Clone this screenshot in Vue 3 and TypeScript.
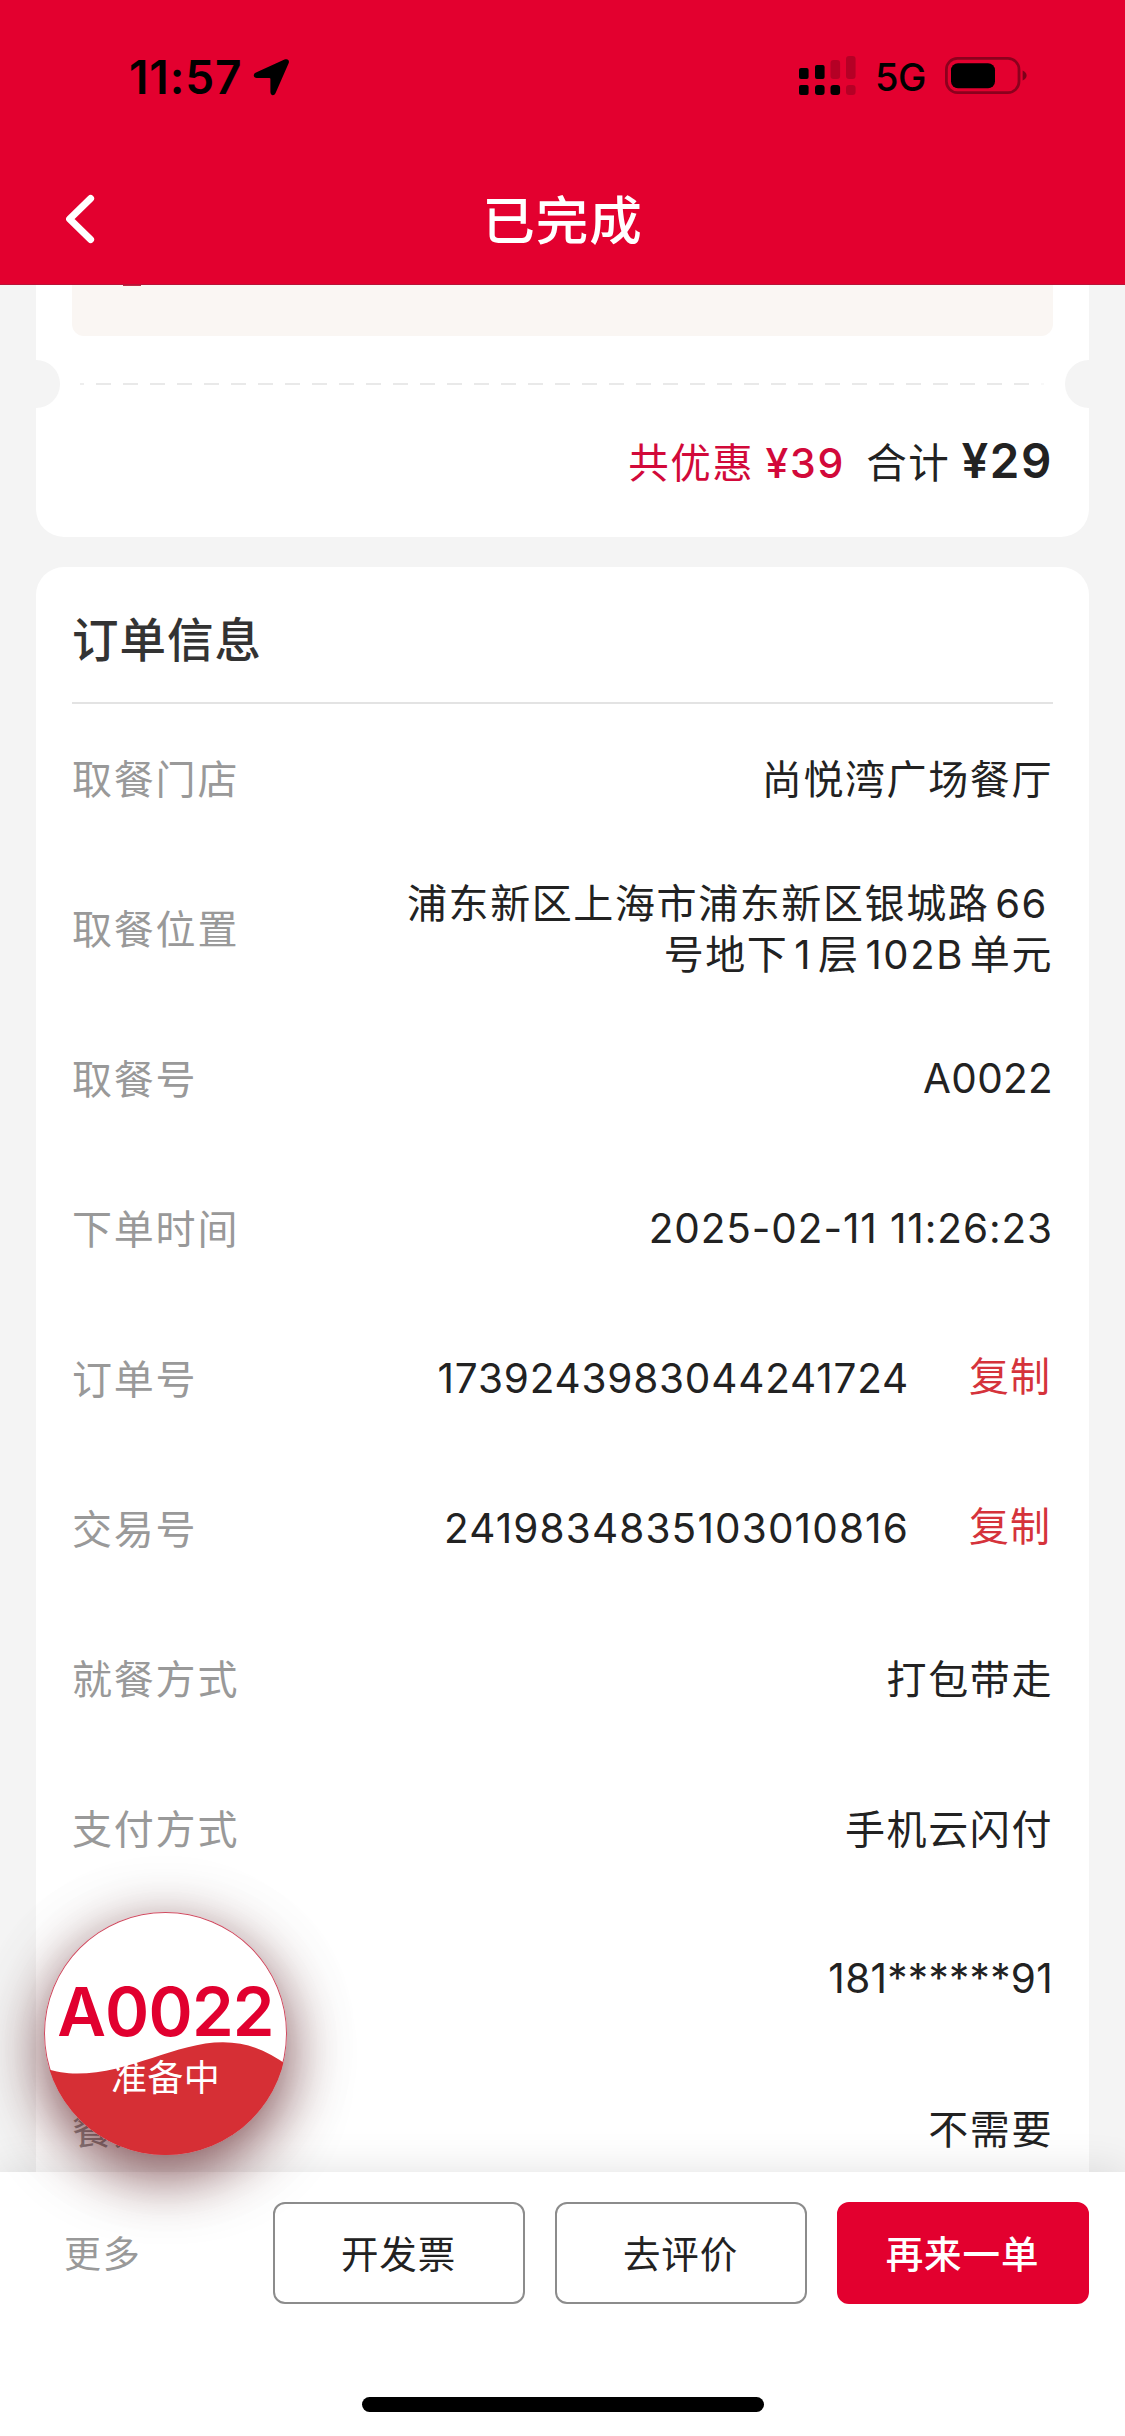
<script setup lang="ts">
interface InfoRow {
  label: string
  lines: string[]
  kind?: 'order' | 'trade' | 'code' | 'date' | 'phone' | 'address'
  copy?: boolean
}

const rows: InfoRow[] = [
  { label: '取餐门店', lines: ['尚悦湾广场餐厅'] },
  { label: '取餐位置', lines: ['浦东新区上海市浦东新区银城路 66', '号地下 1 层 102B 单元'], kind: 'address' },
  { label: '取餐号', lines: ['A0022'], kind: 'code' },
  { label: '下单时间', lines: ['2025-02-11 11:26:23'], kind: 'date' },
  { label: '订单号', lines: ['1739243983044241724'], kind: 'order', copy: true },
  { label: '交易号', lines: ['2419834835103010816'], kind: 'trade', copy: true },
  { label: '就餐方式', lines: ['打包带走'] },
  { label: '支付方式', lines: ['手机云闪付'] },
  { label: '', lines: ['181******91'], kind: 'phone' },
  { label: '餐具', lines: ['不需要'] },
]
</script>

<template>
  <div class="page">
    <header class="header">
      <div class="status">
        <div class="status-left">
          <span class="clock">11:57</span>
          <svg class="arrow" width="38" height="38" viewBox="0 0 38 38">
            <path d="M31.500 1.600 3 14.600C-.4 16.200.300 20 3.600 20H16.400q1 0 1 1V34c0 3.600 3.600 4.400 5.200 1L35.500 5.600C36.900 2.400 34.800.2 31.500 1.600Z" />
          </svg>
        </div>
        <div class="status-right">
          <svg class="signal" width="58" height="40" viewBox="0 0 58 40">
            <rect x="0" y="12" width="9.600" height="11" rx="2" />
            <rect x="16" y="9" width="9.600" height="14" rx="2" />
            <rect x="31.500" y="4" width="9.600" height="19" rx="3" opacity=".2" />
            <rect x="47" y="0" width="9.600" height="23" rx="3" opacity=".2" />
            <rect x="0" y="29" width="9.600" height="10" rx="2" />
            <rect x="16" y="29" width="9.600" height="10" rx="3" />
            <rect x="31.500" y="29" width="9.600" height="10" rx="3" />
            <rect x="47" y="29" width="9.600" height="10" rx="3" opacity=".2" />
          </svg>
          <span class="network">5G</span>
          <svg class="battery" width="82" height="38" viewBox="0 0 82 38">
            <rect x="1.400" y="1.400" width="72.600" height="34.200" rx="11" fill="none" stroke="#000" stroke-opacity=".38" stroke-width="2.800" />
            <rect x="6" y="6.200" width="44" height="25" rx="7" />
            <path d="M77.600 13.600q4 1.800 4 5t-4 5z" opacity=".45" />
          </svg>
        </div>
      </div>
      <div class="nav">
        <svg class="back" width="34" height="52" viewBox="0 0 34 52">
          <path d="M27.600 5.400 6.600 26l21 20.600" fill="none" stroke="#fff" stroke-width="7" stroke-linecap="round" stroke-linejoin="round" />
        </svg>
        <h1 class="title">已完成</h1>
      </div>
    </header>

    <main class="content">
      <section class="card summary">
        <div class="promo"><i class="promo-mark"></i></div>
        <div class="tear">
          <i class="notch left"></i>
          <svg class="dashes" width="965" height="2" viewBox="0 0 965 2">
            <path d="M0 1H4" stroke="#eee" stroke-width="2" />
            <path d="M16 1H949" stroke="#e9e9e9" stroke-width="2" stroke-dasharray="15 12" />
            <path d="M961 1h3" stroke="#f8f8f8" stroke-width="2" />
          </svg>
          <i class="notch right"></i>
        </div>
        <div class="total">
          <span class="saved">共优惠</span>
          <span class="saved-amount">¥39</span>
          <span class="sum">合计</span>
          <span class="sum-amount">¥29</span>
        </div>
      </section>

      <section class="card info">
        <h2 class="info-title">订单信息</h2>
        <div v-for="(row, i) in rows" :key="i" class="row">
          <span class="label">{{ row.label }}</span>
          <div class="right">
            <div class="value" :class="row.kind">
              <div v-for="line in row.lines" :key="line" class="line">{{ line }}</div>
            </div>
            <span v-if="row.copy" class="copy">复制</span>
          </div>
        </div>
      </section>
    </main>

    <footer class="bar">
      <div class="actions">
        <span class="more">更多</span>
        <button class="btn">开发票</button>
        <button class="btn">去评价</button>
        <button class="btn primary">再来一单</button>
      </div>
      <div class="home"></div>
    </footer>

    <div class="float">
      <svg class="wave" width="243" height="243" viewBox="0 0 243 243">
        <defs>
          <clipPath id="disc"><circle cx="121.500" cy="121.500" r="121.500" /></clipPath>
        </defs>
        <path clip-path="url(#disc)" d="M0 156C12 160 22 161.500 33 161.500C86 161.500 132 130.200 179 130.200C205 130.200 225 140 243 153V243H0Z" fill="#d62f35" />
      </svg>
      <span class="float-code">A0022</span>
      <span class="float-state">准备中</span>
    </div>
  </div>
</template>

<style>
body {
  margin: 0;
}
</style>

<style scoped>
.page {
  position: relative;
  display: flex;
  flex-direction: column;
  width: 1125px;
  height: 2436px;
  overflow: hidden;
  background: #f4f4f4;
  color: #222;
  font-family: Inter, "Noto Sans CJK SC", sans-serif;
  font-size: 40px;
  line-height: 51px;
}

.header {
  box-sizing: border-box;
  flex: none;
  height: 285px;
  background: #e3002f;
  border-bottom: 1px solid #b91338;
}

.status {
  display: flex;
  justify-content: space-between;
  height: 153px;
  color: #000;
}

.status-left {
  display: flex;
  align-items: flex-start;
  padding: 51px 0 0 129px;
}

.clock {
  width: 124px;
  font-size: 46px;
  font-weight: 600;
  line-height: 52px;
  letter-spacing: 0.9px;
}

.arrow {
  margin-top: 7px;
}

.status-right {
  display: flex;
  align-items: flex-start;
  padding: 56px 98px 0 0;
}

.network {
  width: 70px;
  margin-left: 18px;
  font-size: 38px;
  font-weight: 500;
  line-height: 43px;
  letter-spacing: -0.5px;
}

.battery {
  margin-top: 1px;
}

.nav {
  display: grid;
  grid-template-columns: 1fr auto 1fr;
  align-items: center;
  height: 132px;
}

.back {
  margin-left: 63px;
}

.title {
  margin: 0;
  padding-top: 3px;
  color: #fff;
  font-size: 52.5px;
  font-weight: 500;
  line-height: 60px;
  letter-spacing: 1px;
}

.content {
  display: flex;
  flex: 1;
  flex-direction: column;
  gap: 30px;
  min-height: 0;
  padding: 0 36px;
  overflow: hidden;
}

.card {
  flex: none;
  background: #fff;
}

.summary {
  height: 252px;
  border-radius: 0 0 28px 28px;
}

.promo {
  height: 51px;
  margin: 0 36px;
  background: #faf6f3;
  border-radius: 0 0 12px 12px;
}

.promo-mark {
  display: block;
  width: 18px;
  height: 1px;
  margin-left: 51px;
  background: #c02843;
}

.tear {
  display: flex;
  align-items: center;
  justify-content: space-between;
  height: 48px;
  margin-top: 24px;
}

.notch {
  width: 24px;
  height: 48px;
  background: #f4f4f4;
}

.notch.left {
  border-radius: 0 24px 24px 0;
}

.notch.right {
  border-radius: 24px 0 0 24px;
}

.total {
  display: flex;
  align-items: baseline;
  justify-content: flex-end;
  margin-top: 25px;
  padding-right: 36px;
  line-height: 56px;
}

.saved,
.saved-amount {
  color: #d2093a;
}

.saved,
.sum {
  font-size: 40.5px;
  letter-spacing: 1.6px;
}

.saved-amount {
  margin-left: 11px;
  font-size: 41px;
  font-weight: 500;
  letter-spacing: 1.8px;
}

.sum {
  margin-left: 21px;
}

.sum-amount {
  margin-left: 11px;
  font-size: 47.5px;
  font-weight: 600;
  letter-spacing: 1.6px;
}

.info {
  padding: 0 36px;
  border-radius: 28px 28px 0 0;
}

.info-title {
  height: 135px;
  margin: 0;
  border-bottom: 2px solid #e3e3e3;
  color: #333;
  font-size: 46.5px;
  font-weight: 500;
  line-height: 147px;
  letter-spacing: 1px;
}

.row {
  display: flex;
  align-items: center;
  justify-content: space-between;
  height: 150px;
}

.label {
  padding-top: 1px;
  color: #999;
  letter-spacing: 1.8px;
}

.right {
  display: flex;
  align-items: center;
}

.value {
  padding-top: 1px;
  text-align: right;
  letter-spacing: 1.6px;
}

.line {
  white-space: nowrap;
}

.value.address {
  padding-top: 0;
  word-spacing: -7px;
}

.address .line:first-child {
  padding-right: 5px;
}

.value.order,
.value.trade,
.value.code,
.value.date,
.value.phone {
  padding: 0 0 1px;
  font-size: 40.5px;
}

.value.code,
.value.phone {
  letter-spacing: 0.3px;
}

.value.order {
  letter-spacing: 0.8px;
}

.value.date {
  letter-spacing: 0.9px;
}

.value.trade {
  letter-spacing: 1.15px;
}

.copy {
  width: 84px;
  margin-left: 60px;
  padding-bottom: 6px;
  color: #d5333b;
  letter-spacing: 1px;
}

.bar {
  position: relative;
  box-sizing: border-box;
  display: flex;
  flex: none;
  flex-direction: column;
  align-items: center;
  justify-content: space-between;
  height: 264px;
  padding: 30px 0 24px;
  background: #fff;
  box-shadow: 0 0 40px rgba(0, 0, 0, 0.12);
}

.actions {
  box-sizing: border-box;
  display: flex;
  align-items: center;
  gap: 30px;
  width: 100%;
  padding: 0 36px 0 64px;
}

.more {
  flex: 1;
  padding-top: 2px;
  color: #999;
  font-size: 37px;
  letter-spacing: 1.8px;
}

.btn {
  box-sizing: border-box;
  width: 252px;
  height: 102px;
  padding: 2px 1px 0 0;
  background: #fff;
  border: 2px solid #8c8c8c;
  border-radius: 12px;
  color: #222;
  font: inherit;
  font-size: 37.5px;
  letter-spacing: 0.9px;
}

.btn.primary {
  background: #e3002f;
  border-color: #e3002f;
  color: #fff;
  font-weight: 500;
}

.home {
  width: 402px;
  height: 15px;
  background: #000;
  border-radius: 8px;
}

.float {
  position: absolute;
  top: 1912px;
  left: 44px;
  box-sizing: border-box;
  display: flex;
  flex-direction: column;
  align-items: center;
  width: 243px;
  height: 243px;
  background: #fff;
  border-radius: 50%;
  box-shadow: inset 0 0 0 1px #cf4a5f, 0 20px 60px rgba(75, 0, 8, 0.68), 0 10px 90px rgba(0, 0, 0, 0.08);
}

.wave {
  position: absolute;
  top: 0;
  left: 0;
}

.float-code {
  position: relative;
  margin-top: 61px;
  color: #e1002f;
  font-size: 67px;
  font-weight: 600;
  line-height: 78px;
  letter-spacing: -0.8px;
}

.float-state {
  position: relative;
  margin-top: 3px;
  color: #fff;
  font-size: 36px;
  line-height: 48px;
  letter-spacing: 0.4px;
}
</style>
